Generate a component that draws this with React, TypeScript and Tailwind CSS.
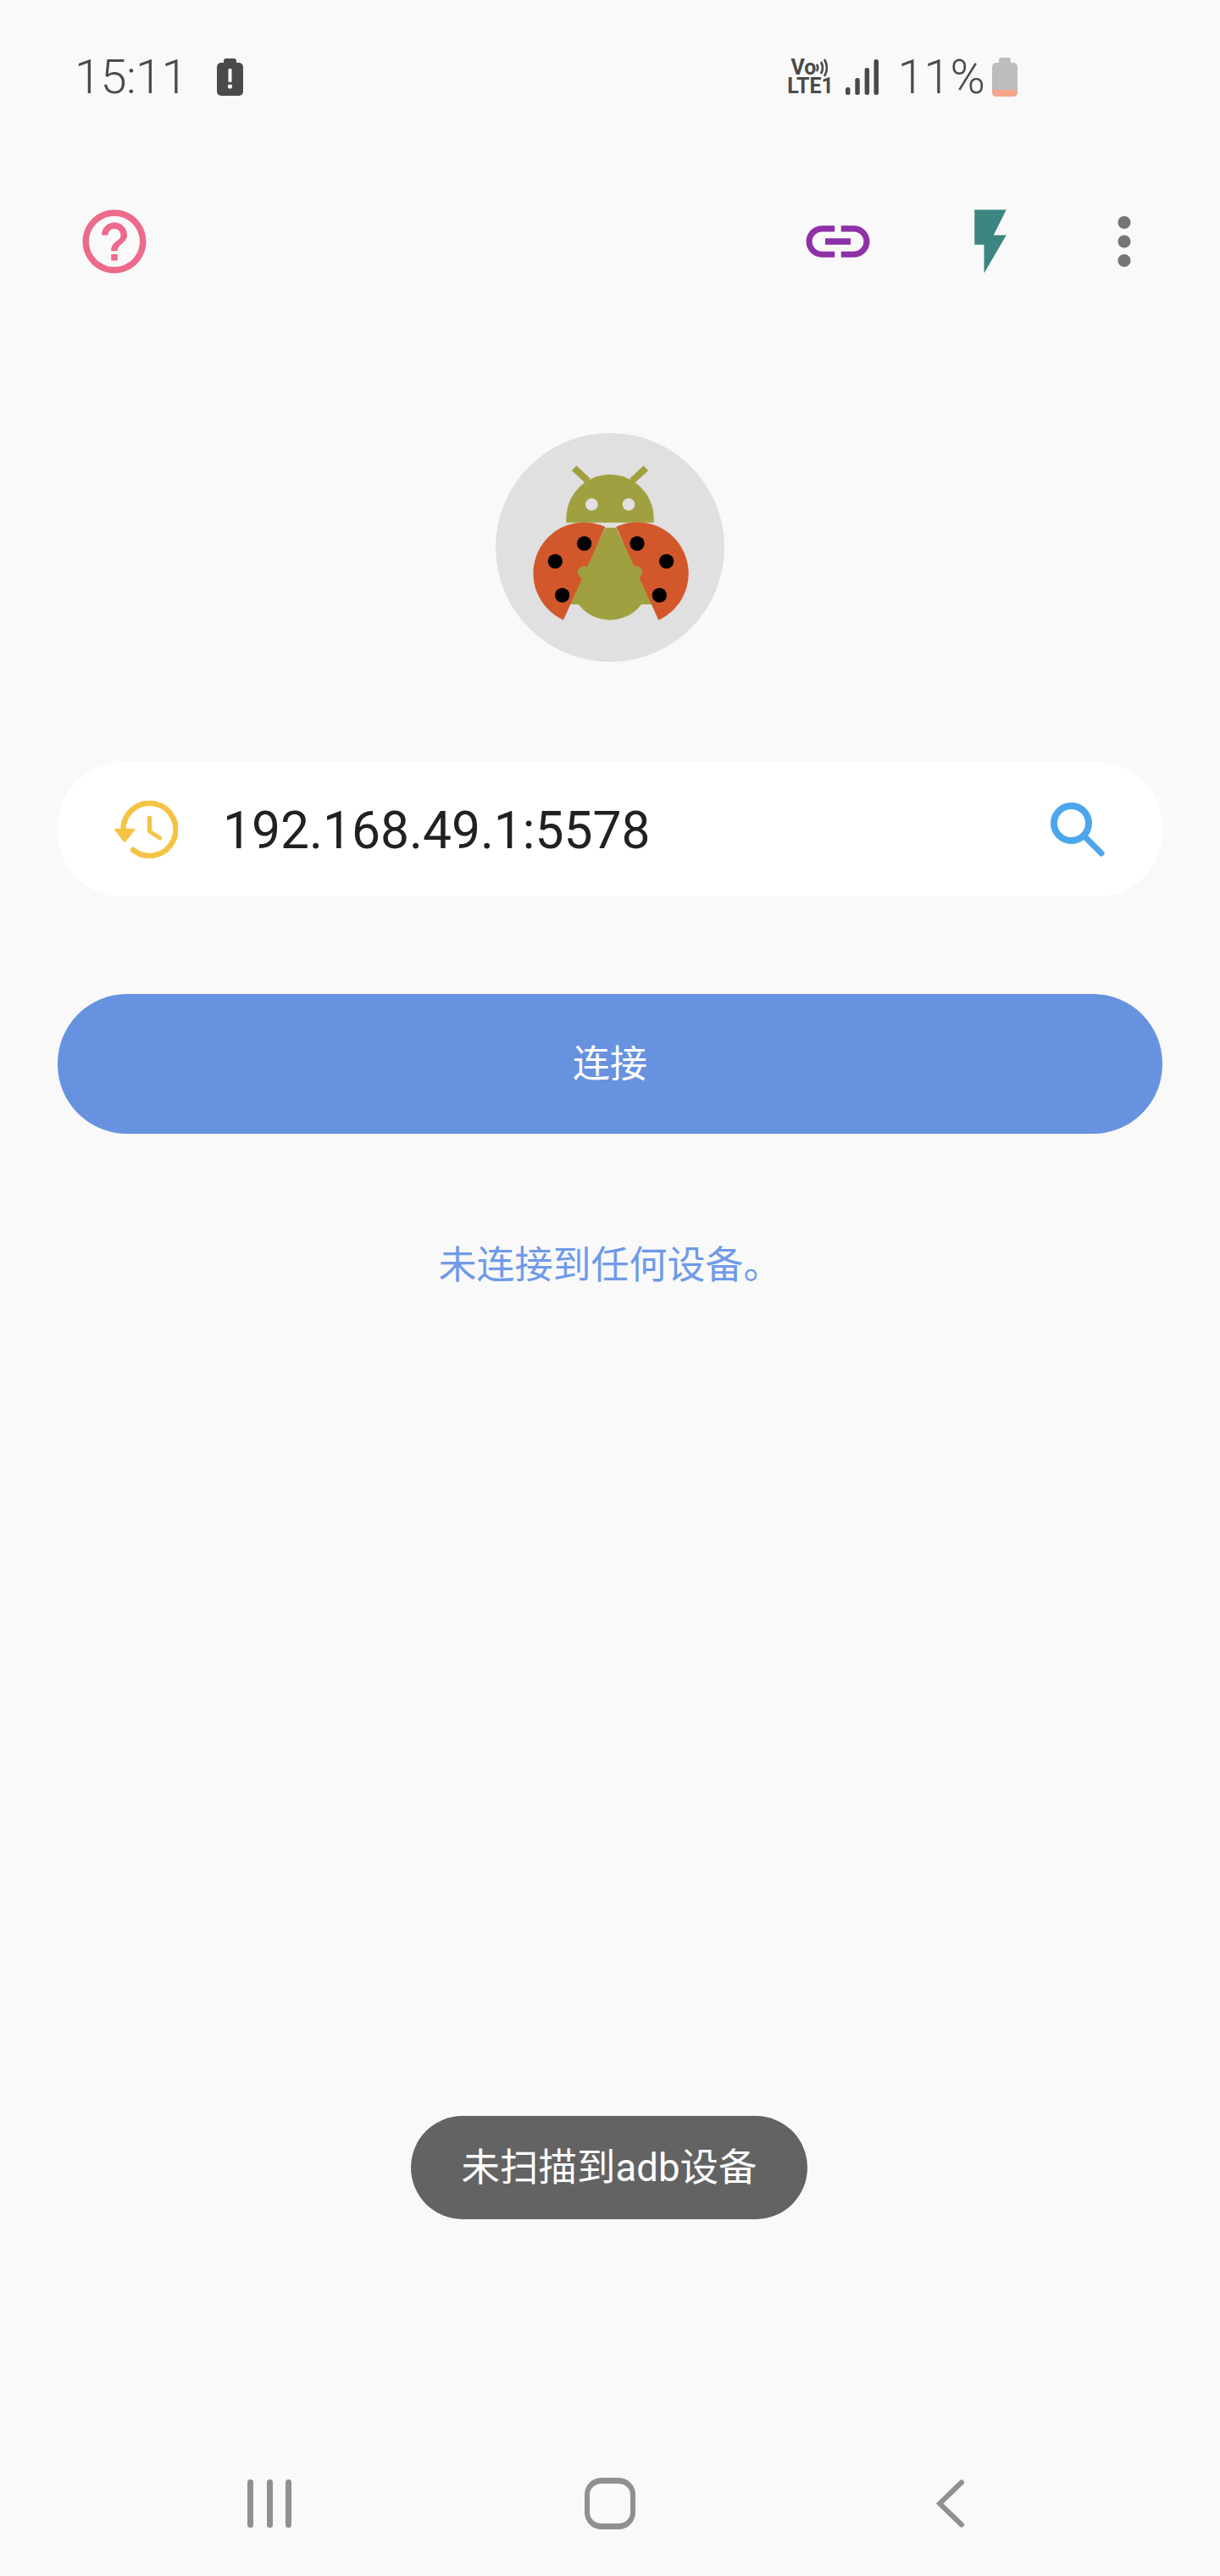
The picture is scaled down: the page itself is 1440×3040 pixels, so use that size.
function StatusBar() {
  return (
    <div className="flex h-[182px] items-center justify-between pl-[88px] pr-[239px] text-[#4a4a4a]">
      <div className="flex items-center">
        <span className="text-[56px] leading-none font-light tracking-[-0.6px]">15:11</span>
        <svg className="ml-[35px]" width="31" height="44" viewBox="0 0 31 44">
          <rect x="8" y="0" width="15" height="8" rx="3" fill="#4a4a4a" />
          <rect x="0" y="5" width="31" height="39" rx="5" fill="#4a4a4a" />
          <rect x="13.5" y="12" width="4" height="16" rx="1" fill="#f9f9f9" />
          <circle cx="15.5" cy="33" r="2.6" fill="#f9f9f9" />
        </svg>
      </div>
      <div className="flex items-center">
        <div className="flex w-[56px] flex-col items-center font-bold">
          <div className="flex items-center pr-[2px]">
            <span className="text-[25px] leading-[22px]">Vo</span>
            <svg width="14" height="22" viewBox="0 0 14 22" fill="none" stroke="#4a4a4a" strokeWidth="2.6">
              <path d="M1 7 Q3.5 11 1 15" />
              <path d="M6 4 Q10 11 6 18" />
              <path d="M10 1 Q16 11 10 21" />
            </svg>
          </div>
          <span className="text-[25px] leading-[22px]">LTE1</span>
        </div>
        <svg className="ml-[14px]" width="39" height="42" viewBox="0 0 39 42" fill="#4a4a4a">
          <rect x="0" y="33" width="5.5" height="9" rx="2.5" />
          <rect x="11.3" y="22" width="5.5" height="20" rx="2.5" />
          <rect x="22.6" y="10" width="5.5" height="32" rx="2.5" />
          <rect x="33.5" y="0" width="5.5" height="42" rx="2.5" />
        </svg>
        <span className="ml-[22px] text-[56px] leading-none font-light">11%</span>
        <svg className="ml-[8px]" width="30" height="46" viewBox="0 0 30 46">
          <rect x="8" y="0" width="14" height="9" rx="3" fill="#bdbdbd" />
          <rect x="0" y="6" width="30" height="40" rx="5" fill="#bdbdbd" />
          <path d="M0 38 H30 V41 A5 5 0 0 1 25 46 H5 A5 5 0 0 1 0 41 Z" fill="#f4a58a" />
        </svg>
      </div>
    </div>
  );
}

function Toolbar() {
  return (
    <div className="mt-[58px] flex items-center justify-between pl-[90px] pr-[68px]">
      <svg width="90" height="90" viewBox="0 0 24 24" fill="#ec6a8b">
        <path d="M11 18h2v-2h-2v2zm1-16C6.48 2 2 6.48 2 12s4.48 10 10 10 10-4.48 10-10S17.52 2 12 2zm0 18c-4.41 0-8-3.59-8-8s3.59-8 8-8 8 3.59 8 8-3.59 8-8 8zm0-14c-2.21 0-4 1.79-4 4h2c0-1.1.9-2 2-2s2 .9 2 2c0 2-3 1.75-3 5h2c0-2.25 3-2.5 3-5 0-2.21-1.79-4-4-4z" />
      </svg>
      <div className="flex items-center">
        <svg width="90" height="90" viewBox="0 0 24 24" fill="#8e30a8">
          <path d="M3.9 12c0-1.71 1.39-3.1 3.1-3.1h4V7H7c-2.76 0-5 2.24-5 5s2.24 5 5 5h4v-1.9H7c-1.71 0-3.1-1.39-3.1-3.1zM8 13h8v-2H8v2zm9-6h-4v1.9h4c1.71 0 3.1 1.39 3.1 3.1s-1.39 3.1-3.1 3.1h-4V17h4c2.76 0 5-2.24 5-5s-2.24-5-5-5z" />
        </svg>
        <svg className="ml-[90px]" width="90" height="90" viewBox="0 0 24 24" fill="#3d8581">
          <path d="M7 2v11h3v9l7-12h-4l4-8z" />
        </svg>
        <svg className="ml-[68px]" width="90" height="90" viewBox="0 0 24 24" fill="#757575">
          <path d="M12 8c1.1 0 2-.9 2-2s-.9-2-2-2-2 .9-2 2 .9 2 2 2zm0 2c-1.1 0-2 .9-2 2s.9 2 2 2 2-.9 2-2-.9-2-2-2zm0 6c-1.1 0-2 .9-2 2s.9 2 2 2 2-.9 2-2-.9-2-2-2z" />
        </svg>
      </div>
    </div>
  );
}

function BugLogo() {
  return (
    <div className="mx-auto mt-[181px] h-[270px] w-[270px] rounded-full bg-[#e0e0e0]">
      <svg width="270" height="270" viewBox="45 33 810 810">
        <path d="M295 350 V335 A155 155 0 0 1 605 335 V350 Z" fill="#a0a040" />
        <path d="M323 157 L372 203 M577 157 L528 203" stroke="#a0a040" strokeWidth="24" />
        <circle cx="385" cy="286" r="22" fill="#e0e0e0" />
        <circle cx="516" cy="286" r="22" fill="#e0e0e0" />
        <path d="M433 368 H472 L600 640 H300 Z" fill="#a0a040" />
        <circle cx="450" cy="555" r="140" fill="#a0a040" />
        <path d="M433 365 A100 100 0 0 0 285 695 Z" fill="#d2582c" />
        <path d="M472 365 A100 100 0 0 1 622 695 Z" fill="#d2582c" />
        <circle cx="358" cy="526" r="22" fill="#a0a040" />
        <circle cx="542" cy="526" r="22" fill="#a0a040" />
        <g fill="#000000">
          <circle cx="359" cy="424" r="26" />
          <circle cx="256" cy="487" r="26" />
          <circle cx="281" cy="607" r="26" />
          <circle cx="546" cy="424" r="26" />
          <circle cx="650" cy="487" r="26" />
          <circle cx="625" cy="607" r="26" />
        </g>
      </svg>
    </div>
  );
}

function AddressBar() {
  return (
    <div className="mx-[68px] mt-[119px] flex h-[158px] items-center rounded-[76px] bg-white pl-[67px] pr-[68px]">
      <svg width="75" height="68" viewBox="0 0 75 68" fill="none" stroke="#f5c344">
        <path d="M10.5 34 A31 31 0 1 1 22 58" strokeWidth="6.5" strokeLinecap="round" />
        <path d="M41.5 20 V36 L53.6 44" strokeWidth="5" strokeLinecap="round" strokeLinejoin="round" />
        <path d="M1 34 H23.5 L12 48 Z" fill="#f5c344" strokeWidth="2" strokeLinejoin="round" />
      </svg>
      <span className="ml-[53px] flex-1 pt-[4px] text-[60.5px] leading-none text-[#212121]">192.168.49.1:5578</span>
      <svg width="64" height="64" viewBox="0 0 64 64" fill="none" stroke="#4ca6ec">
        <circle cx="24.5" cy="24.5" r="20.5" strokeWidth="8" />
        <path d="M42 42 L60 60" strokeWidth="7" strokeLinecap="round" />
      </svg>
    </div>
  );
}

function NavBar() {
  return (
    <div className="mt-auto grid grid-cols-3 px-[117px] pb-[55px]">
      <div className="flex h-[61px] items-center justify-center gap-[15.5px]">
        <div className="h-[57px] w-[7px] rounded-full bg-[#909090]" />
        <div className="h-[57px] w-[7px] rounded-full bg-[#909090]" />
        <div className="h-[57px] w-[7px] rounded-full bg-[#909090]" />
      </div>
      <div className="flex h-[61px] items-center justify-center">
        <div className="h-[61px] w-[60px] rounded-[20px] border-x-[6px] border-y-[7px] border-[#909090]" />
      </div>
      <div className="flex h-[61px] items-center justify-center">
        <svg width="34" height="57" viewBox="0 0 34 57" fill="none" stroke="#909090" strokeWidth="6" strokeLinecap="round" strokeLinejoin="miter">
          <path d="M30 3.5 L4 28.5 L30 53.5" />
        </svg>
      </div>
    </div>
  );
}

export default function App() {
  return (
    <div className="relative flex h-[3040px] w-[1440px] flex-col overflow-hidden bg-[#f9f9f9] font-['Roboto','Noto_Sans_CJK_SC',sans-serif]">
      <StatusBar />
      <Toolbar />
      <BugLogo />
      <AddressBar />
      <button className="mx-[68px] mt-[115px] h-[165px] rounded-[82px] bg-[#6792e0] text-[44px] text-white">连接</button>
      <p className="mt-[130px] text-center text-[45px] leading-[52px] text-[#6f9ae8]">未连接到任何设备。</p>
      <NavBar />
      <div className="absolute left-[485px] top-[2497px] flex h-[122px] w-[468px] items-center justify-center rounded-[61px] bg-[#636363] pt-[3px] text-[45.5px] text-white">
        未扫描到adb设备
      </div>
    </div>
  );
}
